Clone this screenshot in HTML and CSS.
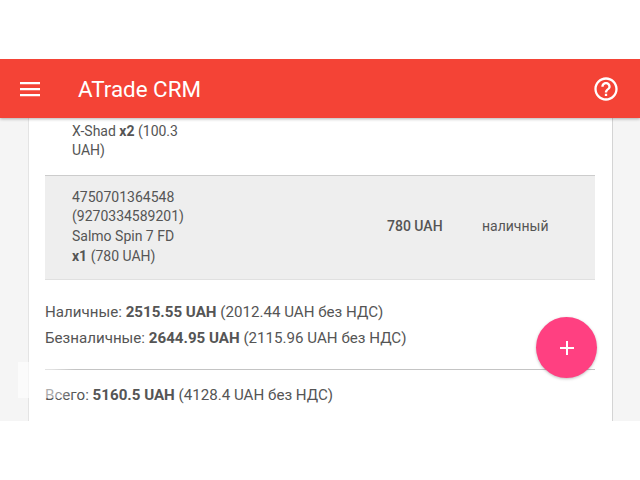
FILE: index.html
```html
<!DOCTYPE html>
<html lang="en">
<head>
  <meta charset="UTF-8">
  <meta name="viewport" content="width=device-width, initial-scale=1.0">
  <title>ATrade CRM</title>
  <link rel="stylesheet" href="styles.css">
</head>
<body>
  <div class="app">
    <div class="toolbar">
      <svg class="menu-icon" width="24" height="24" viewBox="0 0 24 24"><path d="M2 5h20v2.2H2zM2 11h20v2.2H2zM2 17h20v2.2H2z" fill="#fff"/></svg>
      <div class="title">ATrade CRM</div>
      <svg class="help-icon" width="28" height="28" viewBox="0 0 24 24"><path d="M11 18h2v-2h-2v2zm1-16C6.48 2 2 6.48 2 12s4.48 10 10 10 10-4.48 10-10S17.52 2 12 2zm0 18c-4.41 0-8-3.59-8-8s3.59-8 8-8 8 3.59 8 8-3.59 8-8 8zm0-14c-2.21 0-4 1.79-4 4h2c0-1.1.9-2 2-2s2 .9 2 2c0 2-3 1.75-3 5h2c0-2.25 3-2.5 3-5 0-2.21-1.79-4-4-4z" fill="#fff"/></svg>
    </div>
    <div class="content">
      <div class="card">
        <div class="orders">
          <div class="row">
            <div class="goods">Salmo Diver<br>X-Shad <b>x2</b> (100.3 UAH)</div>
          </div>
          <div class="row row-alt">
            <div class="goods">4750701364548 (9270334589201) Salmo Spin 7 FD <b>x1</b> (780 UAH)</div>
            <div class="price">780 UAH</div>
            <div class="pay">наличный</div>
          </div>
        </div>
        <p class="total">Наличные: <b>2515.55 UAH</b> (2012.44 UAH без НДС)</p>
        <p class="total">Безналичные: <b>2644.95 UAH</b> (2115.96 UAH без НДС)</p>
        <hr class="divider">
        <p class="total">Всего: <b>5160.5 UAH</b> (4128.4 UAH без НДС)</p>
      </div>
    </div>
    <div class="fab">
      <svg width="24" height="24" viewBox="0 0 24 24"><path d="M19 13h-6v6h-2v-6H5v-2h6V5h2v6h6v2z" fill="#fff"/></svg>
    </div>
    <div class="watermark"></div>
  </div>
</body>
</html>
```
FILE: styles.css
```css
* {
  margin: 0;
  padding: 0;
  box-sizing: border-box;
  font-family: Roboto, Arial, sans-serif;
}

body {
  background: #ffffff;
  padding-top: 59px;
}

.app {
  position: relative;
  height: 362px;
  overflow: hidden;
  background: #f5f5f5;
  color: #555;
  font-size: 14px;
}

.toolbar {
  position: relative;
  z-index: 2;
  height: 59px;
  background: #f44336;
  box-shadow: 0 1px 3px rgba(0, 0, 0, 0.3);
  display: flex;
  align-items: center;
  padding: 0 20px 0 18px;
  color: #fff;
}

.title {
  flex: 1;
  margin-left: 36px;
  font-size: 22.4px;
}

.content {
  padding: 0 27px 0 28px;
}

.card {
  display: flow-root;
  background: #fff;
  border-right: 1px solid #d4d4d4;
  border-left: 1px solid #e4e4e4;
  padding: 0 17px 0 16px;
  height: 303px;
}

.orders {
  margin-top: -16px;
  border-bottom: 1px solid #e0e0e0;
}

.row {
  display: flex;
  align-items: center;
  padding: 0 0 14px 27px;
  line-height: 19.6px;
}

.row-alt {
  background: #eeeeee;
  border-top: 1px solid #ccc;
  padding: 12px 0 13px 27px;
}

.goods {
  width: 118px;
}

.price {
  margin-left: 197px;
  width: 95px;
  font-weight: 500;
}

.total {
  font-size: 15.13px;
  line-height: 26px;
}

.orders + .total {
  margin-top: 19px;
}

.divider {
  border: 0;
  border-top: 1px solid #c4c4c4;
  margin: 18px 0 12px;
}

.fab {
  position: absolute;
  left: 536px;
  top: 258px;
  width: 61px;
  height: 61px;
  border-radius: 50%;
  background: #ff4081;
  box-shadow: 0 1px 3px rgba(0, 0, 0, 0.25);
  display: flex;
  align-items: center;
  justify-content: center;
  z-index: 3;
}

.watermark {
  position: absolute;
  left: 18px;
  top: 303px;
  width: 57px;
  height: 36px;
  background: linear-gradient(to right, rgba(255, 255, 255, 0.65), rgba(255, 255, 255, 0.5) 60%, rgba(255, 255, 255, 0));
}
```
